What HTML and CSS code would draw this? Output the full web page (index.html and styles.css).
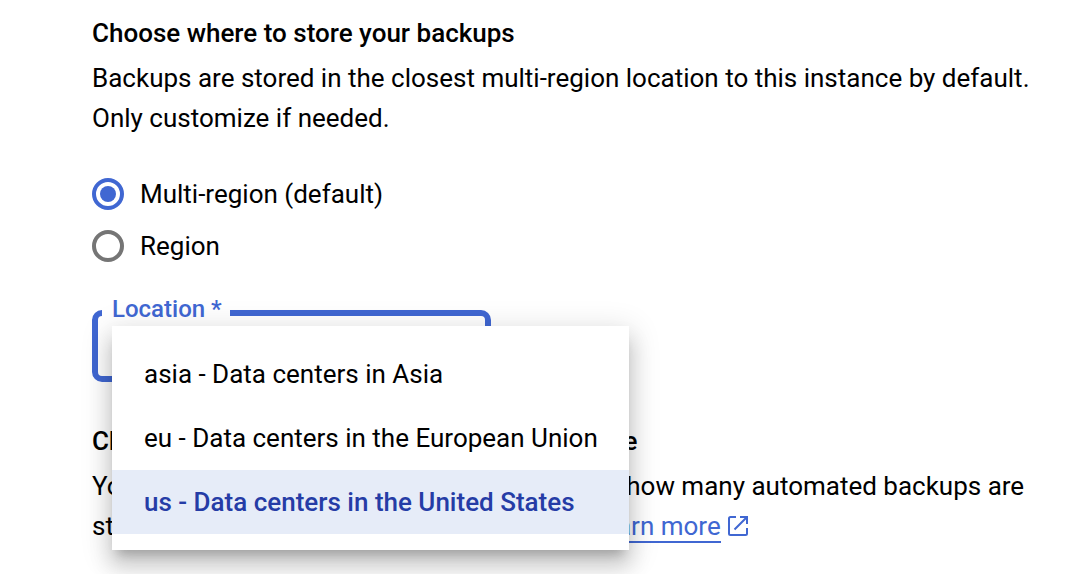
FILE: index.html
```html
<!DOCTYPE html>
<html lang="en">
<head>
<meta charset="utf-8">
<meta name="viewport" content="width=device-width, initial-scale=1">
<title>Backup settings</title>
<link rel="stylesheet" href="styles.css">
</head>
<body>
<main class="page">
  <section class="section">
    <h2 class="title" id="store-title">Choose where to store your backups</h2>
    <p class="text">Backups are stored in the closest multi-region location to this instance by default. Only customize if needed.</p>
    <div class="radios" role="radiogroup" aria-labelledby="store-title">
      <label class="choice"><input class="radio" type="radio" name="kind" checked>Multi-region (default)</label>
      <label class="choice"><input class="radio" type="radio" name="kind">Region</label>
    </div>
    <div class="field">
      <fieldset class="outline">
        <legend class="legend"><label for="location">Location *</label></legend>
        <select class="select" id="location">
          <option>asia</option>
          <option>eu</option>
          <option selected>us</option>
        </select>
      </fieldset>
      <ul class="menu" role="listbox" aria-label="Location">
        <li class="option" role="option">asia - Data centers in Asia</li>
        <li class="option" role="option">eu - Data centers in the European Union</li>
        <li class="option option-selected" role="option" aria-selected="true">us - Data centers in the United States</li>
      </ul>
    </div>
  </section>
  <section class="section">
    <h2 class="title">Choose how many automated backups to store</h2>
    <p class="text">You can customize these settings and specify how many automated backups are stored. The default number is seven items. <a class="link" href="#learn">Learn more</a><svg class="external" viewBox="0 0 20 20" aria-hidden="true"><path d="M8 1H2.500Q1 1 1 2.500V17.500Q1 19 2.500 19H17.500Q19 19 19 17.500V12M12 1H19V8M19 1L6.500 13.500"/></svg></p>
  </section>
</main>
</body>
</html>
```
FILE: styles.css
```css
* {
  box-sizing: border-box;
}

body {
  margin: 0;
  background: #fff;
  color: #000;
  font: 400 26px/40px Roboto, "Liberation Sans", sans-serif;
}

.page {
  display: flex;
  flex-direction: column;
  gap: 44px;
  min-height: 100vh;
  padding: 18px 40px 24px 92px;
}

.title {
  margin: 0 0 10px;
  font-size: 26px;
  line-height: 30px;
  font-weight: 500;
}

.text {
  margin: 0;
}

.radios {
  display: flex;
  flex-direction: column;
  align-items: flex-start;
  gap: 20px;
  margin: 40px 0 32px;
}

.choice {
  display: flex;
  align-items: center;
  gap: 16px;
  line-height: 32px;
}

.radio {
  appearance: none;
  display: grid;
  place-items: center;
  width: 32px;
  height: 32px;
  margin: 0;
  border: 4px solid #757575;
  border-radius: 50%;
}

.radio:checked {
  border-color: #4067d2;
}

.radio:checked::before {
  content: "";
  width: 16px;
  height: 16px;
  border-radius: 50%;
  background: #4067d2;
}

.field {
  position: relative;
}

.outline {
  width: 399px;
  max-width: 100%;
  min-width: 0;
  margin: 0;
  padding: 0 4px;
  border: 6px solid #4067d2;
  border-radius: 10px;
}

.legend {
  padding: 0 8px 8px 10px;
  color: #4067d2;
  font-size: 24px;
  line-height: 30px;
  font-weight: 500;
}

.select {
  appearance: none;
  display: block;
  width: 100%;
  height: 44px;
  padding: 0 16px;
  border: 0;
  outline: 0;
  background: transparent;
  color: #000;
  font: inherit;
}

.menu {
  position: absolute;
  top: 32px;
  left: 20px;
  width: 517px;
  margin: 0;
  padding: 16px 0;
  background: #fff;
  box-shadow: 0 10px 10px -6px rgba(0, 0, 0, 0.2), 0 16px 20px 2px rgba(0, 0, 0, 0.14), 0 6px 28px 4px rgba(0, 0, 0, 0.12);
  list-style: none;
}

.option {
  padding: 0 32px;
  line-height: 64px;
  white-space: nowrap;
}

.option-selected {
  background: #e6ecf8;
  color: #253ca6;
  font-weight: 500;
}

.link {
  border-bottom: 2px solid #4067d2;
  color: #4067d2;
  text-decoration: none;
}

.external {
  width: 20px;
  height: 20px;
  margin-left: 7px;
  vertical-align: -1px;
  fill: none;
  stroke: #4067d2;
  stroke-width: 2;
}
```
